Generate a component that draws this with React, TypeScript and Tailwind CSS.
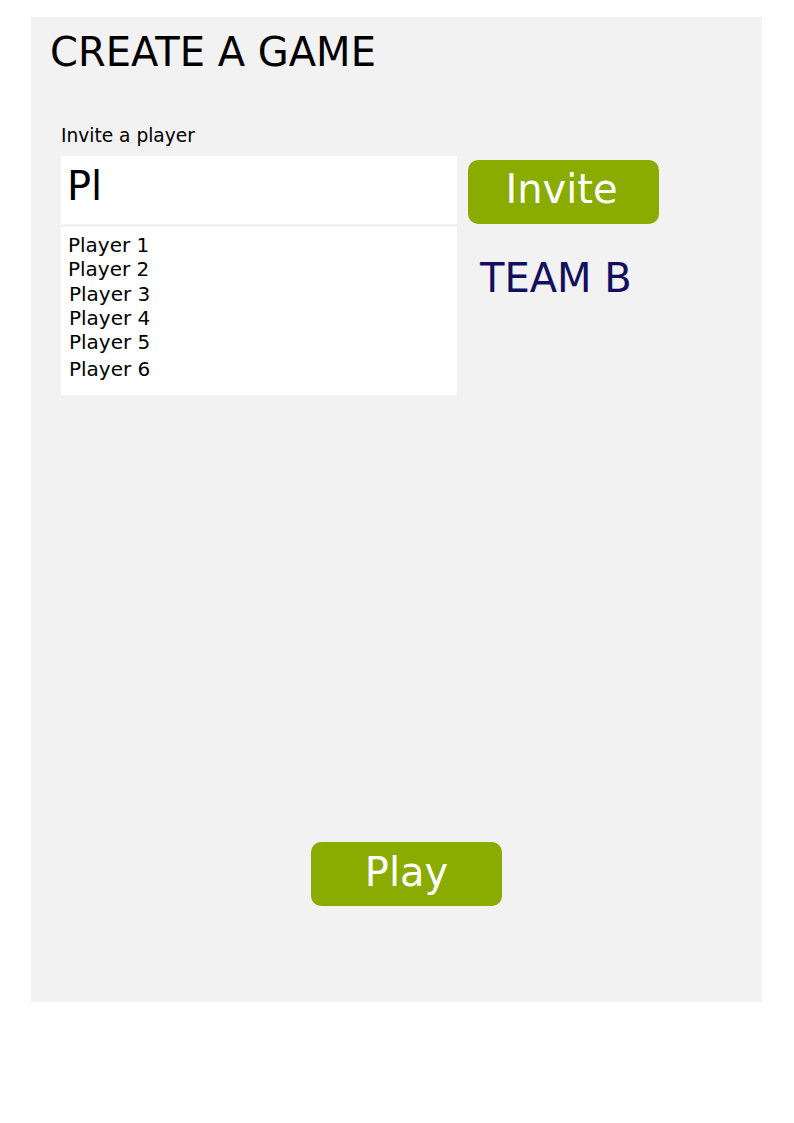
const players = [
  { name: "Player 1", cls: "pl-[7px]" },
  { name: "Player 2", cls: "pl-[7px]" },
  { name: "Player 3", cls: "pl-[8px] mt-[1.5px]" },
  { name: "Player 4", cls: "pl-[8px]" },
  { name: "Player 5", cls: "pl-[8px]" },
  { name: "Player 6", cls: "pl-[8px] mt-[2.5px]" },
];

export default function App() {
  return (
    <div className="min-h-[1123px] bg-white pt-[17px] pl-[31px] font-['DejaVu_Sans',sans-serif]">
      <div className="flex h-[985px] w-[731px] flex-col bg-[#f2f2f2]">
        {/* Title */}
        <h1 className="pl-[19px] pt-[15px] text-[40px] leading-none text-black">CREATE A GAME</h1>

        {/* Invite form */}
        <div className="ml-[30px] mt-[55px]">
          <div className="text-[18.6px] leading-none text-black">Invite a player</div>
          <div className="mt-[10px] flex">
            <div className="w-[396px]">
              <div className="h-[68px] bg-white pl-[6px] pt-[10px] text-[40px] leading-none text-black">Pl</div>
              <div className="mt-[3px] h-[168px] bg-white pt-[6px]">
                {players.map((p) => (
                  <div key={p.name} className={`text-[20px] leading-[24px] text-black ${p.cls}`}>
                    {p.name}
                  </div>
                ))}
              </div>
            </div>
            <div className="ml-[11px] pt-[4px]">
              <button className="flex h-[64px] w-[191px] justify-center rounded-[10px] bg-[#8aab00] pr-[4px] pt-[9px] text-[40px] leading-none text-white">
                Invite
              </button>
              <div className="ml-[12px] mt-[34px] text-[40px] leading-none text-[#120f5e]">TEAM B</div>
            </div>
          </div>
        </div>

        {/* Play */}
        <button className="mb-[96px] ml-[280px] mt-auto flex h-[64px] w-[191px] justify-center self-start rounded-[10px] bg-[#8aab00] pt-[10px] text-[40px] leading-none text-white">
          Play
        </button>
      </div>
    </div>
  );
}
